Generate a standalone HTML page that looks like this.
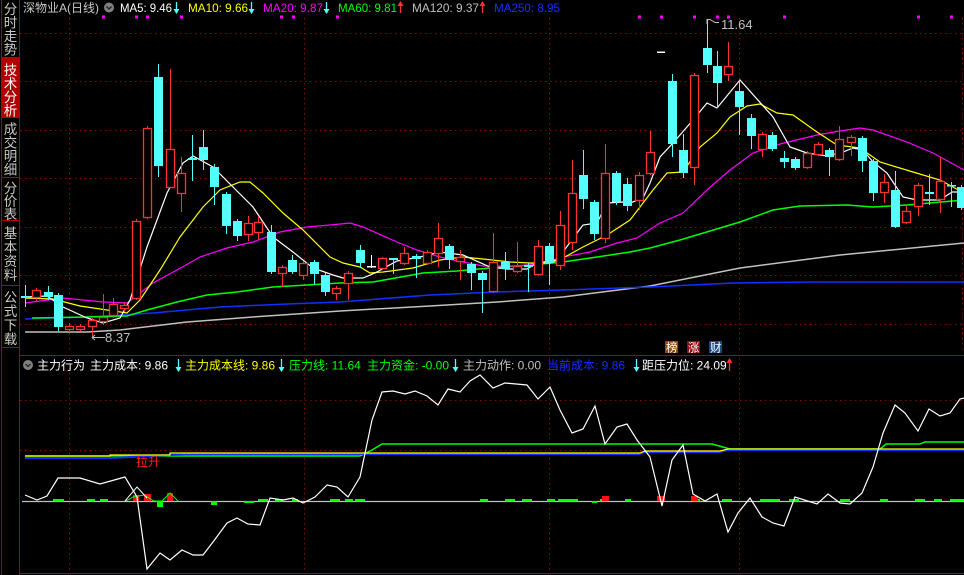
<!DOCTYPE html>
<html><head><meta charset="utf-8"><style>
html,body{margin:0;padding:0;background:#000;width:964px;height:575px;overflow:hidden}
svg{display:block}
text{font-family:"Liberation Sans","Noto Sans CJK SC",sans-serif}
</style></head><body>
<svg id="s" width="964" height="575" viewBox="0 0 964 575" xmlns="http://www.w3.org/2000/svg">
<rect width="964" height="575" fill="#000"/>
<g id="grid" stroke="#8a0a0a" stroke-width="1" stroke-dasharray="1.5,3.5" fill="none">
<path d="M20 33.5H964M20 81.5H964M20 130.5H964M20 178.5H964M20 227.5H964M20 275.5H964M20 324.5H964"/>
<path d="M69.5 18V350M304.5 18V350M549.5 18V350M739.5 18V350M962.5 18V350"/>
<path d="M20 400.5H964M20 450.5H964"/>
<path d="M69.5 358V572M304.5 358V572M549.5 358V572M739.5 358V572"/>
</g>
<g id="main"></g>
<g id="sub"></g>
<g id="arr"></g>
<g stroke="#b00000" stroke-width="1" fill="none">
<path d="M1.5 0V575M19.5 0V575M19 355.5H964M19 573.5H964"/>
</g>
<rect x="2" y="57" width="17" height="60" fill="#b00000"/>
<g stroke="#b00000" fill="none"><path d="M2 57.5H19M2 117.5H19M2 177.5H19M2 220.5H19M2 285.5H19M2 347.5H19"/></g>
<g font-size="13.5" fill="#c8c8c8" text-anchor="middle">
<text x="10.5" y="14">分</text><text x="10.5" y="27.5">时</text><text x="10.5" y="41">走</text><text x="10.5" y="54.5">势</text>
<text x="10.5" y="75" fill="#fff">技</text><text x="10.5" y="88.5" fill="#fff">术</text><text x="10.5" y="102" fill="#fff">分</text><text x="10.5" y="115.5" fill="#fff">析</text>
<text x="10.5" y="134">成</text><text x="10.5" y="147.5">交</text><text x="10.5" y="161">明</text><text x="10.5" y="174.5">细</text>
<text x="10.5" y="193">分</text><text x="10.5" y="206">价</text><text x="10.5" y="219">表</text>
<text x="10.5" y="238">基</text><text x="10.5" y="252">本</text><text x="10.5" y="266">资</text><text x="10.5" y="280">料</text>
<text x="10.5" y="302">公</text><text x="10.5" y="316">式</text><text x="10.5" y="330">下</text><text x="10.5" y="344">载</text>
</g>
<g font-size="12">
<text x="23" y="12" fill="#c8c8c8">深物业A(日线)</text>
<circle cx="109" cy="7.5" r="5" fill="#808080"/><path d="M106.5 6.5l2.5 2.5 2.5-2.5" stroke="#222" stroke-width="1.3" fill="none"/>
<text x="120" y="12" fill="#fff" textLength="52" lengthAdjust="spacingAndGlyphs">MA5: 9.46</text>
<text x="188" y="12" fill="#ffff00" textLength="60" lengthAdjust="spacingAndGlyphs">MA10: 9.66</text>
<text x="263" y="12" fill="#ff00ff" textLength="60" lengthAdjust="spacingAndGlyphs">MA20: 9.87</text>
<text x="338" y="12" fill="#00ff00" textLength="59" lengthAdjust="spacingAndGlyphs">MA60: 9.81</text>
<text x="412" y="12" fill="#c0c0c0" textLength="67" lengthAdjust="spacingAndGlyphs">MA120: 9.37</text>
<text x="494" y="12" fill="#1030ff" textLength="66" lengthAdjust="spacingAndGlyphs">MA250: 8.95</text>
</g>
<g fill="#ff00ff" id="dots"></g>
<path d="M92 337.5h13M92 337.5l3-2.5M92 337.5l3 2.5" stroke="#c0c0c0" fill="none"/>
<text x="105" y="342" font-size="13" fill="#c0c0c0">8.37</text>
<path d="M707 19v5M707 19.5h3l5 3h4" stroke="#c0c0c0" fill="none"/>
<text x="721" y="29" font-size="13" fill="#c0c0c0">11.64</text>
<rect x="657" y="51.5" width="8" height="1.5" fill="#fff"/>
<rect x="665" y="341" width="13" height="12" fill="#8a4a10"/><text x="666" y="351.5" font-size="11.5" fill="#fff">榜</text>
<rect x="687" y="341" width="13" height="12" fill="#8b1010"/><text x="688" y="351.5" font-size="11.5" fill="#fff">涨</text>
<rect x="709" y="341" width="13" height="12" fill="#1a4a80"/><text x="710" y="351.5" font-size="11.5" fill="#fff">财</text>
<g font-size="12">
<circle cx="28" cy="365" r="5" fill="#808080"/><path d="M25.5 364l2.5 2.5 2.5-2.5" stroke="#222" stroke-width="1.3" fill="none"/>
<text x="37" y="369.5" fill="#fff">主力行为</text>
<text x="90" y="369.5" fill="#fff">主力成本: 9.86</text>
<text x="185" y="369.5" fill="#ffff00">主力成本线: 9.86</text>
<text x="289" y="369.5" fill="#00ff00">压力线: 11.64</text>
<text x="367" y="369.5" fill="#00ff00">主力资金: -0.00</text>
<text x="463" y="369.5" fill="#c0c0c0">主力动作: 0.00</text>
<text x="547" y="369.5" fill="#1030ff">当前成本: 9.86</text>
<text x="642" y="369.5" fill="#fff">距压力位: 24.09</text>
</g>
<text x="136" y="466" font-size="12" fill="#ff2020">拉升</text>
</svg>
<script>
var NS="http://www.w3.org/2000/svg";
function el(p,t,a){var e=document.createElementNS(NS,t);for(var k in a)e.setAttribute(k,a[k]);p.appendChild(e);return e;}
var M=document.getElementById("main"),S=document.getElementById("sub"),A=document.getElementById("arr");
function arrow(x,y0,y1,down,col){
 el(A,"line",{x1:x+.5,y1:y0,x2:x+.5,y2:y1,stroke:col,"stroke-width":1.3});
 if(down) el(A,"path",{d:"M"+(x-2.5)+" "+(y1-4)+"L"+(x+3.5)+" "+(y1-4)+"L"+(x+.5)+" "+(y1+1)+"Z",fill:col});
 else el(A,"path",{d:"M"+(x-2.5)+" "+(y0+4)+"L"+(x+3.5)+" "+(y0+4)+"L"+(x+.5)+" "+(y0-1)+"Z",fill:col});
}
arrow(176,2,13,true,"#54ffff");arrow(251,2,13,true,"#54ffff");arrow(326,2,13,true,"#54ffff");
arrow(400,2,13,false,"#ff3232");arrow(482,2,13,false,"#ff3232");
arrow(178,359,371,true,"#54ffff");arrow(281,359,371,true,"#54ffff");arrow(455,359,371,true,"#54ffff");
arrow(636,359,371,true,"#54ffff");arrow(729,359,371,false,"#ff3232");
function line(p,pts,c,w){el(p,"polyline",{points:pts.map(function(q){return q.join(",")}).join(" "),fill:"none",stroke:c,"stroke-width":w||1});}
line(M,[[25,332],[87,332],[120,330],[187,322],[253,317],[340,311],[430,306],[497,302],[563,297],[650,286],[740,268],[840,255],[964,243]],"#c0c0c0",1.5);
line(M,[[25,319],[87,317],[153,313],[220,307],[287,304],[340,302],[430,295],[497,292],[563,290],[650,287],[733,283],[813,282],[964,282]],"#1030ff",1.5);
line(M,[[32,318],[87,317],[127,316],[147,310],[177,302],[207,295],[237,292],[273,287],[307,285],[340,283],[373,282],[423,273],[457,271],[490,268],[530,265],[563,262],[597,257],[630,252],[650,248],[680,240],[720,228],[740,222],[773,210],[800,206],[847,205],[873,207],[907,205],[964,200]],"#00ff00",1.5);
line(M,[[25,303],[63,298],[103,302],[127,303],[153,283],[177,270],[200,257],[227,248],[253,242],[280,232],[307,227],[330,225],[350,223],[363,227],[397,242],[417,250],[440,257],[463,262],[483,266],[517,266],[543,263],[563,257],[590,252],[617,243],[637,238],[660,223],[683,213],[707,190],[730,170],[753,153],[780,144],[817,135],[840,131],[860,128],[873,130],[907,142],[933,153],[964,170]],"#ff00ff",1.2);
line(M,[[25,298],[53,299],[80,306],[107,310],[127,313],[140,300],[160,270],[180,237],[203,207],[220,190],[240,182],[250,182],[263,193],[283,213],[303,230],[330,257],[343,263],[360,267],[370,273],[383,272],[413,268],[440,260],[463,257],[483,259],[510,262],[530,263],[550,263],[563,258],[583,247],[607,235],[630,220],[653,190],[667,173],[683,172],[700,147],[717,133],[730,117],[747,106],[760,104],[777,113],[793,115],[817,132],[837,145],[860,148],[880,162],[913,172],[940,180],[964,193]],"#ffff00",1.2);
line(M,[[25,297],[47,296],[63,307],[87,318],[103,323],[120,318],[130,300],[147,247],[167,193],[183,163],[193,156],[213,167],[233,187],[253,207],[273,237],[293,252],[313,268],[333,275],[343,278],[363,278],[375,273],[397,261],[420,257],[440,252],[463,255],[490,267],[507,269],[527,269],[537,263],[557,260],[577,233],[583,225],[597,223],[607,203],[623,202],[630,203],[643,198],[650,183],[660,157],[673,143],[693,120],[707,103],[717,108],[740,80],[773,117],[790,147],[807,153],[827,156],[843,152],[853,148],[863,150],[873,162],[887,173],[903,197],[917,200],[940,200],[952,192],[964,192]],"#fff",1.2);
var C=[["c",25,296,298,285,307],["r",36,290,297,288,302],["c",48,292,297,286,300],["c",58,295,327,293,331],["r",69,326,329,323,332],["r",80,326,329,324,331],["r",92,320,326,318,338],["r",103,317,321,294,325],["r",113,304,315,298,318],["r",124,305,308,302,312],["r",136,221,298,219,300],["r",147,128,217,126,219],["c",158,77,166,64,177],["r",170,149,187,69,188],["r",181,173,193,157,212],["c",192,158,160,135,181],["c",203,147,160,130,170],["c",214,167,187,164,205],["c",226,194,226,192,234],["c",237,221,236,219,241],["r",248,223,234,216,241],["r",258,222,232,216,240],["c",271,232,272,225,274],["r",282,267,273,265,287],["c",292,260,272,255,274],["r",303,263,275,261,280],["c",314,262,274,260,285],["c",325,275,292,273,296],["r",336,288,293,286,300],["r",348,273,283,271,300],["c",360,250,263,245,268],["w",371,266,267,255,268],["r",382,258,268,257,270],["c",393,258,260,258,274],["r",404,253,263,247,265],["c",416,256,259,254,278],["r",427,252,263,250,265],["r",438,238,253,223,267],["c",449,246,260,244,269],["r",460,257,261,250,280],["c",471,264,273,262,290],["c",482,273,280,271,313],["r",493,262,291,233,293],["c",505,262,269,252,280],["r",517,266,271,242,273],["c",528,265,267,263,292],["r",538,246,274,240,276],["c",549,246,263,243,285],["r",560,225,265,211,270],["r",572,193,242,160,250],["c",583,175,199,150,209],["c",594,202,234,200,240],["r",605,173,238,144,243],["c",616,173,202,171,205],["c",627,184,206,178,211],["r",639,175,200,172,210],["r",650,152,173,131,175],["c",672,81,144,74,157],["c",683,150,173,134,178],["r",694,75,167,73,185],["c",707,48,65,20,73],["c",717,66,83,51,108],["r",728,66,74,42,81],["c",739,91,107,80,135],["c",751,118,136,114,149],["r",762,134,149,132,157],["c",772,135,149,132,151],["c",784,158,162,151,168],["c",795,159,168,157,170],["r",807,153,167,151,169],["r",818,144,154,142,156],["c",829,150,157,148,176],["r",839,139,159,126,161],["r",851,137,142,135,156],["c",862,138,161,136,172],["c",873,161,193,159,201],["r",884,182,192,174,203],["c",895,190,227,171,228],["r",906,211,222,206,224],["r",918,185,206,183,216],["c",929,192,194,174,205],["r",940,181,199,157,213],["c",951,185,186,182,207],["c",961,187,208,185,210]];
C.forEach(function(d){var t=d[0],x=d[1],a=d[2],b=d[3],h=d[4],l=d[5];
 var col=t=="r"?"#ff3232":(t=="w"?"#fff":"#54ffff");
 if(t=="r"){el(M,"line",{x1:x+.5,y1:h,x2:x+.5,y2:a,stroke:col});el(M,"line",{x1:x+.5,y1:b,x2:x+.5,y2:l,stroke:col});
  el(M,"rect",{x:x-3.5,y:a+.5,width:8,height:Math.max(b-a,1),fill:"#000",stroke:col,"stroke-width":1.3});}
 else{el(M,"line",{x1:x+.5,y1:h,x2:x+.5,y2:l,stroke:col});
  el(M,"rect",{x:x-4,y:a,width:9,height:Math.max(b-a,1.5),fill:col});}
});
[102,135,146,180,280,292,336,638,660,693,716,727,783,917,950].forEach(function(x){el(document.getElementById("dots"),"rect",{x:x,y:15.5,width:3,height:3});});
el(S,"line",{x1:22,y1:501.5,x2:964,y2:501.5,stroke:"#c0c0c0","stroke-width":1.2});
line(S,[[25,456],[360,456],[372,450],[382,444],[712,444],[730,449],[880,449],[886,444],[920,444],[925,442],[964,442]],"#00ff00",1.5);
line(S,[[25,458],[110,458],[170,455],[200,454],[340,454],[640,454],[645,452],[720,452],[728,450],[964,450]],"#1030ff",2);
line(S,[[25,456],[110,456],[110,455],[170,455],[170,453],[340,453],[640,453],[645,451],[720,451],[728,449],[964,449]],"#ffff00",1.2);
[[53,11],[87,8],[100,8],[258,10],[275,8],[292,6],[330,10],[345,8],[355,10],[480,8],[505,10],[522,10],[547,8],[558,20],[600,8],[625,6],[692,8],[722,10],[760,20],[789,10],[840,10],[880,8],[915,10],[934,8],[950,14]].forEach(function(b){el(S,"rect",{x:b[0],y:499,width:b[1],height:2.5,fill:"#00ff00"});});
[[157,501,6,6],[211,501,6,4],[244,501,10,2],[592,501,5,2]].forEach(function(b){el(S,"rect",{x:b[0],y:b[1],width:b[2],height:b[3],fill:"#00ff00"});});
[[133,495,6],[144,494,7],[167,493,6],[602,496,7],[657,496,8],[691,496,7]].forEach(function(b){el(S,"rect",{x:b[0],y:b[1],width:b[2],height:501-b[1],fill:"#ff1010"});});
line(S,[[126,501],[133,497],[144,495],[154,501],[162,501],[170,493],[178,501]],"#00ff00",1);
line(S,[[125,501],[137,487],[147,498]],"#fff",1);
line(S,[[25,495],[37,500],[47,496],[58,478],[80,478],[100,484],[125,477],[137,497],[147,569],[160,553],[170,560],[182,550],[193,555],[203,555],[213,542],[227,523],[237,518],[248,524],[260,525],[270,498],[283,500],[293,498],[303,503],[315,497],[327,485],[337,487],[348,497],[360,477],[372,420],[382,392],[393,391],[405,394],[415,391],[427,396],[438,405],[448,389],[460,392],[470,381],[480,375],[493,388],[505,383],[527,385],[538,399],[550,387],[560,410],[572,433],[583,429],[595,406],[605,444],[617,427],[627,424],[637,440],[650,457],[662,506],[672,460],[683,445],[693,494],[705,501],[717,494],[728,532],[738,513],[750,498],[762,517],[773,523],[784,526],[795,497],[817,504],[828,494],[840,503],[850,504],[862,493],[873,467],[883,433],[895,405],[905,413],[918,431],[929,409],[940,416],[950,413],[960,399],[964,398]],"#fff",1.2);
</script>
</body></html>
